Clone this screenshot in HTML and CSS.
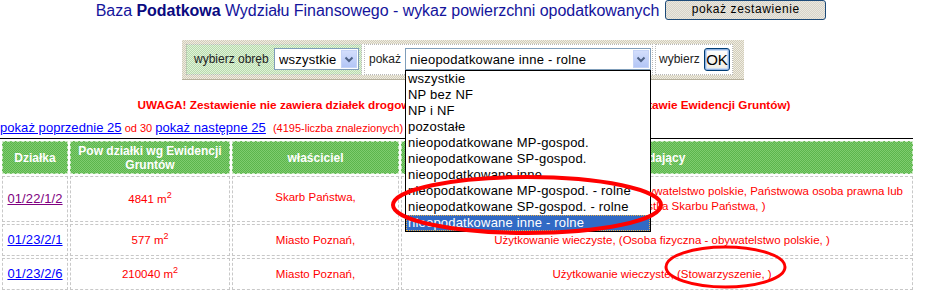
FILE: index.html
```html
<!DOCTYPE html>
<html lang="pl">
<head>
<meta charset="utf-8">
<title>Baza Podatkowa</title>
<link rel="stylesheet" href="styles.css">
</head>
<body>
<div class="page">
  <div class="title-row">
    <h1 class="title">Baza <b>Podatkowa</b> Wydziału Finansowego - wykaz powierzchni opodatkowanych</h1>
    <button class="btn-xp" type="button">pokaż zestawienie</button>
  </div>

  <div class="filter-wrap">
    <div class="filter">
      <div class="filter-inner">
        <div class="fcell fcell-green">
          <span class="flabel">wybierz obręb</span>
          <div class="sel sel-obreb">
            <span class="sel-text">wszystkie</span>
            <span class="arrow"><svg width="16" height="18" viewBox="0 0 16 18"><polyline points="4.5,7.5 8,11 11.5,7.5" fill="none" stroke="#4d6185" stroke-width="2"/></svg></span>
          </div>
        </div>
        <div class="fcell fcell-show">
          <span class="flabel">pokaż</span>
          <div class="sel sel-show">
            <span class="sel-text">nieopodatkowane inne - rolne</span>
            <span class="arrow"><svg width="16" height="18" viewBox="0 0 16 18"><polyline points="4.5,7.5 8,11 11.5,7.5" fill="none" stroke="#4d6185" stroke-width="2"/></svg></span>
            <ul class="dropdown">
              <li>wszystkie</li>
              <li>NP bez NF</li>
              <li>NP i NF</li>
              <li>pozostałe</li>
              <li>nieopodatkowane MP-gospod.</li>
              <li>nieopodatkowane SP-gospod.</li>
              <li>nieopodatkowane inne</li>
              <li>nieopodatkowane MP-gospod. - rolne</li>
              <li>nieopodatkowane SP-gospod. - rolne</li>
              <li class="is-selected">nieopodatkowane inne - rolne</li>
            </ul>
          </div>
        </div>
        <div class="fcell fcell-ok">
          <span class="flabel">wybierz</span>
          <button class="btn-ok" type="button">OK</button>
        </div>
      </div>
    </div>
  </div>

  <p class="warn">UWAGA! Zestawienie nie zawiera działek drogowych (powierzchnie działek podane na podstawie Ewidencji Gruntów)</p>

  <div class="pager">
    <a class="plink" href="#">pokaż poprzednie 25</a>
    <span class="pnote">od 30</span>
    <a class="plink" href="#">pokaż następne 25</a>
    <span class="pnote pcount">(4195-liczba znalezionych)</span>
  </div>

  <table class="grid">
    <colgroup>
      <col class="c1"><col class="c2"><col class="c3"><col class="c4">
    </colgroup>
    <thead>
      <tr>
        <th>Działka</th>
        <th>Pow działki wg Ewidencji<br>Gruntów</th>
        <th>właściciel</th>
        <th>władający</th>
      </tr>
    </thead>
    <tbody>
      <tr>
        <td><a class="plot visited" href="#">01/22/1/2</a></td>
        <td>4841 m<sup>2</sup></td>
        <td class="top">Skarb Państwa,</td>
        <td class="holder">Współwłasność łączna, (Osoba fizyczna - obywatelstwo polskie, Państwowa osoba prawna lub<br>państwowa jednostka Skarbu Państwa, )</td>
      </tr>
      <tr>
        <td><a class="plot" href="#">01/23/2/1</a></td>
        <td>577 m<sup>2</sup></td>
        <td>Miasto Poznań,</td>
        <td class="holder">Użytkowanie wieczyste, (Osoba fizyczna - obywatelstwo polskie, )</td>
      </tr>
      <tr>
        <td><a class="plot" href="#">01/23/2/6</a></td>
        <td>210040 m<sup>2</sup></td>
        <td>Miasto Poznań,</td>
        <td class="holder">Użytkowanie wieczyste, (Stowarzyszenie, )</td>
      </tr>
      <tr class="row-empty">
        <td></td>
        <td></td>
        <td></td>
        <td></td>
      </tr>
    </tbody>
  </table>

  <svg class="marks" width="928" height="292" viewBox="0 0 928 292">
    <ellipse cx="527" cy="205" rx="134" ry="28" fill="none" stroke="#ff0000" stroke-width="4"/>
    <ellipse cx="725.5" cy="267" rx="59.5" ry="20" fill="none" stroke="#ff0000" stroke-width="3"/>
  </svg>
</div>
</body>
</html>
```

FILE: styles.css
```css
* { box-sizing: border-box; }

body {
  margin: 0;
  background: #fff;
  font-family: "Liberation Sans", Arial, sans-serif;
}

.page {
  position: relative;
  width: 928px;
  height: 292px;
  overflow: hidden;
}

/* title */
.title-row {
  display: flex;
  justify-content: center;
  align-items: flex-start;
  gap: 6px;
  height: 20px;
  padding-right: 6px;
}
.title {
  margin: 0;
  padding-top: 1px;
  font-size: 16px;
  line-height: 20px;
  font-weight: normal;
  letter-spacing: -0.04px;
  color: #14149c;
  white-space: nowrap;
}
.title b { color: #0a0a80; }

.btn-xp {
  width: 161px;
  height: 20px;
  margin: 0;
  padding: 0 0 2px;
  border: 1px solid #1c4a78;
  border-radius: 3px;
  background: repeating-conic-gradient(#e9e7df 0 25%, #d6d3c9 0 50%) 0 0 / 2px 2px;
  font-family: "Liberation Sans", Arial, sans-serif;
  font-size: 12px;
  letter-spacing: 0.6px;
  color: #000;
}

/* filter bar */
.filter-wrap {
  display: flex;
  justify-content: center;
  margin-top: 20px;
  padding-right: 2px;
}
.filter {
  padding: 4px 11px 4px 4px;
  background: repeating-conic-gradient(#d2cdb9 0 25%, #efece2 0 50%) 0 0 / 2px 2px;
  border-bottom: 1px solid #b6b09c;
}
.filter-inner {
  display: flex;
  gap: 2px;
  background: #fff;
}
.fcell {
  display: flex;
  align-items: flex-start;
  height: 31px;
  padding: 3px 2px 4px 7px;
  border: 1px dotted #b9b9b9;
  font-size: 12px;
  color: #222;
}
.flabel {
  line-height: 22px;
  white-space: nowrap;
}
.fcell-green {
  width: 176px;
  background: repeating-conic-gradient(#b7dcac 0 25%, #e0f1da 0 50%) 0 0 / 2px 2px;
}
.fcell-show {
  width: 289px;
  padding-left: 4px;
  padding-right: 1px;
}
.fcell-ok {
  width: 78px;
  padding-left: 3px;
}

.sel {
  position: relative;
  display: flex;
  align-items: center;
  height: 22px;
  margin-left: auto;
  padding-left: 4px;
  border: 1px solid #7f9db9;
  background: #fff;
  font-size: 13px;
  letter-spacing: 0.2px;
  color: #000;
}
.sel-obreb { width: 85px; }
.sel-show { width: 246px; }
.sel-text {
  flex: 1;
  white-space: nowrap;
  overflow: hidden;
}
.arrow {
  width: 16px;
  height: 18px;
  margin-right: 1px;
  background: linear-gradient(#d3defc, #b3c6f6);
  border: 1px solid #c5d3f6;
}
.arrow svg { display: block; margin: -1px 0 0 -1px; }

.dropdown {
  position: absolute;
  top: 21px;
  left: -1px;
  z-index: 5;
  width: 246px;
  margin: 0;
  padding: 0;
  list-style: none;
  border: 1px solid #000;
  background: #fff;
}
.dropdown li {
  height: 16px;
  padding-left: 2px;
  font-size: 13px;
  line-height: 16px;
  letter-spacing: 0.2px;
  color: #000;
  white-space: nowrap;
}
.dropdown li.is-selected {
  background: #316ac5;
  color: #fff;
  outline: 1px dotted #e8b048;
  outline-offset: -1px;
}

.btn-ok {
  width: 26px;
  height: 23px;
  margin: 0 0 0 auto;
  padding: 0;
  border: 1px solid #003c74;
  border-radius: 3px;
  background: linear-gradient(#ffffff, #ecebe4);
  box-shadow: inset 0 0 0 1px #8fb2e2, inset 0 0 0 2px #c9dbf5;
  font-family: "Liberation Sans", Arial, sans-serif;
  font-size: 15px;
  color: #000;
}

/* warning */
.warn {
  margin: 18px 0 0;
  font-size: 11.75px;
  line-height: 14px;
  font-weight: bold;
  color: #ff0000;
  text-align: center;
  white-space: nowrap;
}

/* pager */
.pager {
  display: flex;
  align-items: baseline;
  gap: 3px;
  width: 913px;
  height: 19px;
  margin-top: 8px;
  border-bottom: 1px solid #000;
  white-space: nowrap;
}
.plink {
  font-size: 13px;
  letter-spacing: 0.05px;
  color: #0000ff;
  text-decoration: underline;
}
.pnote {
  font-size: 11px;
  color: #ff0000;
}
.pcount { margin-left: 4px; }

/* table */
.grid {
  width: 915px;
  table-layout: fixed;
  border-collapse: separate;
  border-spacing: 2px;
}
.c1 { width: 66px; }
.c2 { width: 160px; }
.c3 { width: 167px; }
.c4 { width: 512px; }

.grid th {
  height: 33px;
  padding: 2px 2px 1px;
  border: 1px dashed #cfe9c8;
  background: repeating-conic-gradient(#5cb54c 0 25%, #7fcc6f 0 50%) 0 0 / 2px 2px;
  font-size: 12px;
  line-height: 14px;
  font-weight: bold;
  color: #fff;
  text-align: center;
  vertical-align: middle;
}
.grid td {
  padding: 7px 2px;
  border: 1px dashed #c8c8c8;
  font-size: 11.5px;
  line-height: 15px;
  color: #ff0000;
  text-align: center;
  vertical-align: middle;
}
.grid td.top { padding-bottom: 11px; }
.grid td.holder { padding-left: 12px; }
.grid .row-empty td { height: 31px; }
.grid sup {
  font-size: 9px;
  line-height: 0;
}

.plot {
  font-size: 13px;
  letter-spacing: 0.1px;
  color: #0000ff;
  text-decoration: underline;
}
.plot.visited { color: #800080; }

/* annotation marks */
.marks {
  position: absolute;
  top: 0;
  left: 0;
  z-index: 10;
  pointer-events: none;
}
```
